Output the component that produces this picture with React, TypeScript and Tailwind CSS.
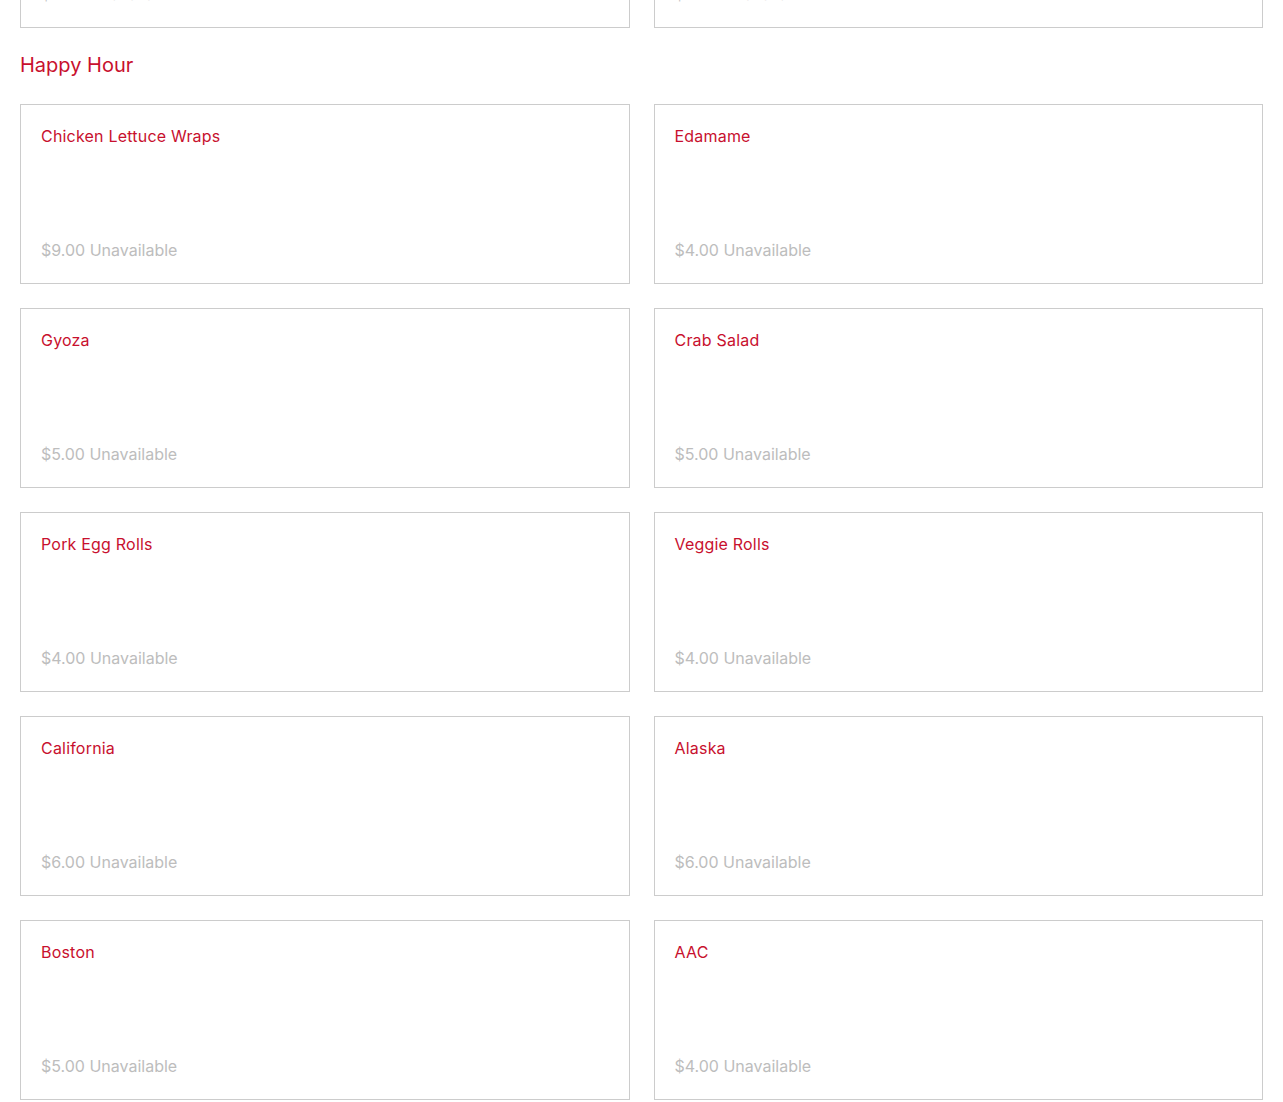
import React from 'react';

type Item = { name: string; price: string };

const items: Item[] = [
  { name: 'Chicken Lettuce Wraps', price: '$9.00' },
  { name: 'Edamame', price: '$4.00' },
  { name: 'Gyoza', price: '$5.00' },
  { name: 'Crab Salad', price: '$5.00' },
  { name: 'Pork Egg Rolls', price: '$4.00' },
  { name: 'Veggie Rolls', price: '$4.00' },
  { name: 'California', price: '$6.00' },
  { name: 'Alaska', price: '$6.00' },
  { name: 'Boston', price: '$5.00' },
  { name: 'AAC', price: '$4.00' },
];

function MenuCard({ name, price }: Item) {
  return (
    <div className="flex h-[180px] flex-col justify-between border border-[#cccccc] bg-white px-5 pb-[21px] pt-[19px]">
      <div className="text-[16px] leading-6 tracking-[0.2px] text-[#c8102e]">{name}</div>
      <div className="text-[16px] leading-6 text-[#bdbdbd]">{price} Unavailable</div>
    </div>
  );
}

export default function App() {
  return (
    <div className="min-h-screen overflow-hidden bg-white px-5 pb-4 font-['Inter',sans-serif]">
      {/* previous section, scrolled mostly off screen */}
      <div className="-mt-[152px] grid grid-cols-2 gap-6">
        <MenuCard name="Miso Soup" price="$3.00" />
        <MenuCard name="House Salad" price="$3.00" />
      </div>

      <h2 className="mb-[25px] mt-[23px] text-[20px] leading-[28px] text-[#c8102e]">Happy Hour</h2>

      <div className="grid grid-cols-2 gap-6">
        {items.map((it) => (
          <MenuCard key={it.name} {...it} />
        ))}
      </div>
    </div>
  );
}
